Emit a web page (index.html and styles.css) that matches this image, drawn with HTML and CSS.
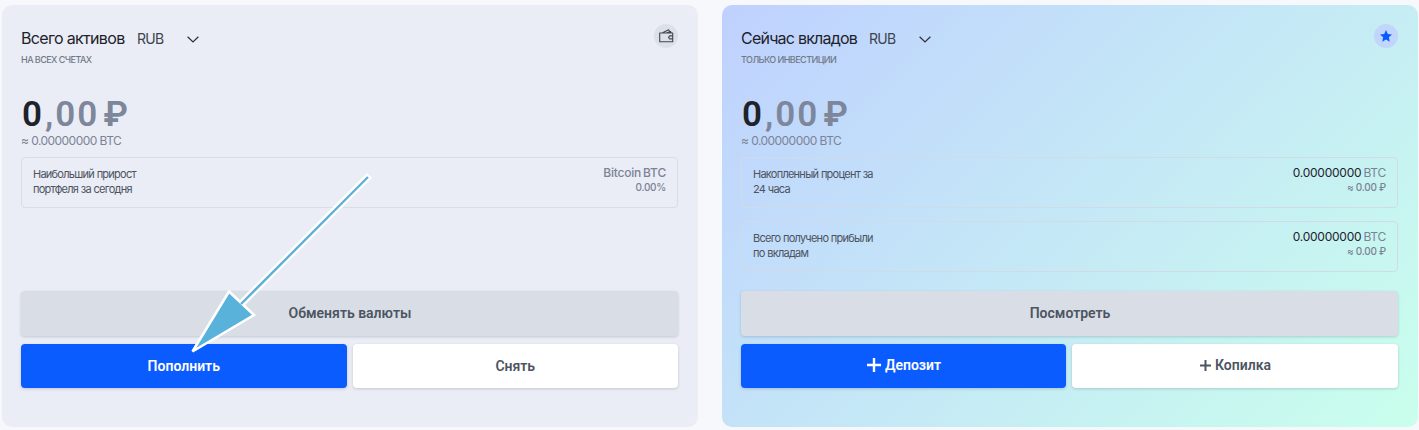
FILE: index.html
```html
<!DOCTYPE html>
<html lang="ru">
<head>
<meta charset="utf-8">
<title>Активы</title>
<link rel="stylesheet" href="styles.css">
</head>
<body>
<main class="dashboard">
  <section class="card">
    <header class="head">
      <h2 class="title title-assets">Всего активов</h2>
      <span class="currency">RUB</span>
      <svg class="chevron" viewBox="0 0 12 7"><path d="M.6.7 6 6 11.4.7"/></svg>
      <span class="badge badge-wallet">
        <svg width="16" height="16" viewBox="0 0 16 16" fill="none" stroke="#42474f" stroke-width="1.1" stroke-linejoin="round"><path d="M1.7 5h13v8.800h-13zM4.600 4.800l6-3 2 3M8.800 4.800l3.700-1.300.8 1.300M14.700 7.900h-3l-1.200 1.500 1.200 1.500h3z"/></svg>
      </span>
    </header>
    <p class="subtitle">НА ВСЕХ СЧЕТАХ</p>
    <p class="total"><span class="whole">0</span>,00 ₽</p>
    <p class="equivalent">≈ 0.00000000 BTC</p>
    <div class="stats">
      <div class="stat">
        <p class="stat-label">Наибольший прирост<br>портфеля за сегодня</p>
        <div class="stat-value"><p class="amount coin">Bitcoin BTC</p><p class="minor">0.00%</p></div>
      </div>
    </div>
    <div class="actions">
      <button class="button muted">Обменять валюты</button>
      <button class="button primary">Пополнить</button>
      <button class="button plain">Снять</button>
    </div>
  </section>
  <section class="card invest">
    <header class="head">
      <h2 class="title title-invest">Сейчас вкладов</h2>
      <span class="currency">RUB</span>
      <svg class="chevron" viewBox="0 0 12 7"><path d="M.6.7 6 6 11.4.7"/></svg>
      <span class="badge badge-star">
        <svg width="12" height="12" viewBox="0 0 12 12" fill="#0b5cff"><path d="M6 0l1.8 3.900 4.200.5-3.100 2.900.8 4.400L6 9.600l-3.700 2.100.8-4.400L0 4.400l4.200-.5z"/></svg>
      </span>
    </header>
    <p class="subtitle">ТОЛЬКО ИНВЕСТИЦИИ</p>
    <p class="total"><span class="whole">0</span>,00 ₽</p>
    <p class="equivalent">≈ 0.00000000 BTC</p>
    <div class="stats">
      <div class="stat">
        <p class="stat-label">Накопленный процент за<br>24 часа</p>
        <div class="stat-value"><p class="amount"><span class="number">0.00000000</span> BTC</p><p class="minor">≈ 0.00 ₽</p></div>
      </div>
      <div class="stat">
        <p class="stat-label">Всего получено прибыли<br>по вкладам</p>
        <div class="stat-value"><p class="amount"><span class="number">0.00000000</span> BTC</p><p class="minor">≈ 0.00 ₽</p></div>
      </div>
    </div>
    <div class="actions">
      <button class="button muted">Посмотреть</button>
      <button class="button primary with-icon"><svg width="14" height="14" viewBox="0 0 14 14"><path d="M7 0v14M0 7h14" stroke="currentColor" stroke-width="2.400"/></svg>Депозит</button>
      <button class="button plain with-icon"><svg width="11" height="11" viewBox="0 0 11 11"><path d="M5.500 0v11M0 5.500h11" stroke="currentColor" stroke-width="2"/></svg>Копилка</button>
    </div>
  </section>
  <svg class="pointer" width="190" height="196" viewBox="0 0 190 196">
    <path d="M181 15 55 141" stroke="#fff" stroke-width="7" stroke-linecap="square"/>
    <path d="M43 128.500 68 152 6.500 188.500z" fill="#58b2da" stroke="#fff" stroke-width="2.600"/>
    <path d="M182 14 55 141" stroke="#5dafd7" stroke-width="2.300"/>
  </svg>
</main>
</body>
</html>
```
FILE: styles.css
```css
* { box-sizing: border-box; }
body { margin: 0; background: #f6f8fb; font-family: Inter, "Liberation Sans", sans-serif; color: #1e222b; }
p, h2 { margin: 0; white-space: nowrap; }
.dashboard { position: relative; height: 430px; padding: 5px 1px 3px 2px; display: grid; grid-template-columns: 696px 696px; gap: 24px; overflow: hidden; }
.card { height: 422px; padding: 19px 20px 39px 19px; border-radius: 10px; background: #eaedf5; display: flex; flex-direction: column; }
.invest { background: linear-gradient(135deg, #bfd1ff, #c5eaf5 55%, #c9ffec); }
.head { display: flex; align-items: center; height: 28px; }
.title { font-size: 16px; font-weight: 400; line-height: 28px; letter-spacing: -.67px; }
.title-assets { width: 116px; }
.title-invest { width: 128px; letter-spacing: -.78px; }
.currency { width: 50px; font-size: 14px; letter-spacing: -.7px; color: #3e444d; }
.chevron { width: 12px; height: 7px; fill: none; stroke: #2b3039; stroke-width: 1.2; margin-top: 3px; }
.badge { width: 24px; height: 24px; margin: -4px 0 0 auto; border-radius: 50%; display: grid; place-items: center; }
.badge-wallet { background: #dce0e8; }
.badge-star { background: #c2d5fb; }
.subtitle { height: 13px; margin-top: 1px; font-size: 9px; line-height: 13px; font-weight: 500; letter-spacing: -.55px; color: #717987; }
.total { height: 42px; margin-top: 26px; padding-left: 1px; font: 600 35px/45px Roboto, sans-serif; letter-spacing: 2px; word-spacing: -6.5px; color: #7d869a; }
.whole { color: #1e222b; letter-spacing: 3px; }
.equivalent { height: 18px; margin-top: -2px; font-size: 12px; line-height: 18px; letter-spacing: -.55px; color: #7b8395; }
.stats { display: grid; gap: 13px; margin-top: 7px; }
.stat { height: 51px; padding: 7px 11px; border: 1px solid #d8dce5; border-radius: 4px; display: flex; justify-content: space-between; }
.stat-label { margin-top: 2px; font-size: 11px; line-height: 15px; letter-spacing: -.75px; word-spacing: .3px; color: #4c535f; }
.stat-value { text-align: right; color: #7b8395; }
.amount { font-size: 12px; line-height: 15px; letter-spacing: -.25px; word-spacing: -1px; }
.coin { font-weight: 500; letter-spacing: -.2px; }
.number { color: #1e222b; }
.minor { font-size: 10px; line-height: 14px; letter-spacing: -.25px; font-weight: 500; }
.actions { margin-top: auto; display: grid; grid-template-columns: 1fr 1fr; grid-template-rows: 45px 44px; gap: 8px 6px; }
.button { padding: 0; border: 0; border-radius: 4px; font: 600 14px/20px Roboto, sans-serif; color: #4d5562; box-shadow: 0 1px 3px rgba(40, 50, 70, .2); }
.muted { grid-column: 1 / -1; padding: 0 0 2px 1px; background: #d9dde5; }
.primary { background: #0b5cff; color: #fff; }
.plain { background: #fff; }
.with-icon { display: flex; align-items: center; justify-content: center; gap: 4px; padding: 0 0 2px 1px; }
.invest .stat { border-color: #d2dbe5; }
.invest .actions { grid-template-columns: 325px 1fr; }
.pointer { position: absolute; left: 186px; top: 163px; }
```
